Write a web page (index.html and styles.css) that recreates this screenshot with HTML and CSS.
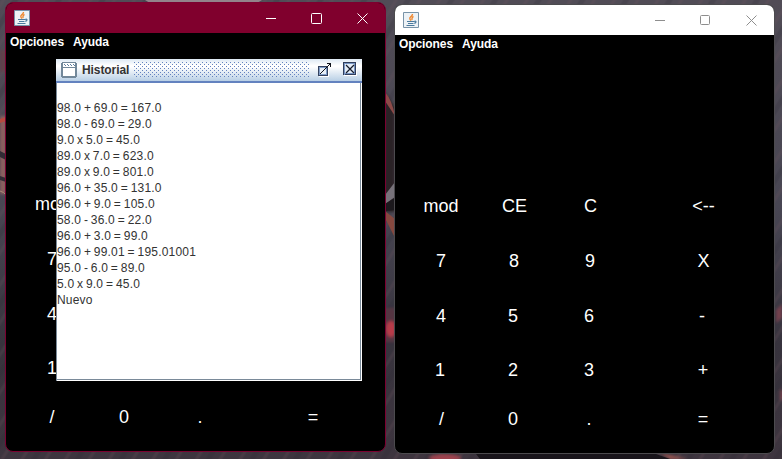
FILE: index.html
```html
<!DOCTYPE html>
<html lang="es">
<head>
<meta charset="utf-8">
<title>Calculadora</title>
<link rel="stylesheet" href="styles.css">
</head>
<body>
<svg class="wallpaper" viewBox="0 0 782 459" aria-hidden="true">
  <defs>
    <linearGradient id="sky" x1="0" y1="0" x2="0" y2="1">
      <stop offset="0" stop-color="#514c56"/><stop offset=".45" stop-color="#484653"/><stop offset=".75" stop-color="#37333d"/><stop offset="1" stop-color="#3e353f"/>
    </linearGradient>
    <pattern id="streaks" width="37" height="30" patternUnits="userSpaceOnUse" patternTransform="rotate(32)">
      <path d="M3 0V30M23 0V30" stroke="#73535f" stroke-opacity=".2" stroke-width="3"/>
      <path d="M13 0V30" stroke="#292731" stroke-opacity=".2" stroke-width="5"/>
    </pattern>
    <filter id="soft"><feGaussianBlur stdDeviation="1.6"/></filter>
  </defs>
  <path fill="url(#sky)" d="M0 0H782V459H0z"/>
  <path fill="url(#streaks)" d="M0 0H782V459H0z"/>
  <path d="M145 0H262L257 3H150z" fill="#93838a"/>
  <g filter="url(#soft)">
    <path d="M0 50h6v22H0z" fill="#62414b"/>
    <path d="M0 116h6v78H0z" fill="#8b5f5e"/>
    <path d="M384 92l11 15v105h-11z" fill="#2b2328"/>
    <path d="M384 308h12v34h-12z" fill="#553643"/>
    <ellipse cx="391" cy="329" rx="5" ry="8" fill="#b83a49"/>
    <ellipse cx="445" cy="458" rx="16" ry="4" fill="#9c424d"/>
    <path d="M776 310l6-6v14l-6 5zM780 390h3v10h-3z" fill="#74404e"/>
    <path d="M660 453l28 6h-18z" fill="#9c5550"/>
  </g>
  <path d="M0 119l6-2v4l-6 2z" fill="#b6493f"/>
  <path d="M0 151l6 3v6l-6-3zM0 176l6 2v4l-6-2z" fill="#302b35"/>
  <path d="M0 191q4 1 6 4" stroke="#a98a76" fill="none"/>
  <path d="M385 92q7 8 10 24l-10-15z" fill="#8c4a48"/>
  <path d="M385 195l10-13v15l-10 7z" fill="#77727a"/>
  <path d="M385 204l10-6v12l-10 1z" fill="#1c191d"/>
  <path d="M385 211l10 8v19l-10-20z" fill="#85483f"/>
  <path d="M476 454h180l14 5H480z" fill="#19151b"/>
</svg>

<main class="desktop">
  <section class="window window-active">
    <header class="titlebar">
      <svg class="java" viewBox="0 0 16 16"><use href="#cup"/></svg>
      <svg class="controls" viewBox="0 0 102 12"><path d="M0 6.500h10M45.500 2.500q0-1 1-1h8q1 0 1 1v8q0 1-1 1h-8q-1 0-1-1zM91.500 1.500l10 10m0-10l-10 10"/></svg>
    </header>
    <nav class="menu"><span>Opciones</span><span>Ayuda</span></nav>
    <div class="keys">
      <b class="covered">mod</b><i></i><i></i><i></i>
      <b class="covered">7</b><i></i><i></i><i></i>
      <b class="covered">4</b><i></i><i></i><i></i>
      <b class="covered">1</b><i></i><i></i><i></i>
      <b>/</b><b class="l">0</b><b class="l">.</b><b class="l">=</b>
    </div>
    <section class="history">
      <header class="caption">
        <svg class="frame-icon" viewBox="0 0 16 16"><path d="M1 1h14v14H1z" fill="#fff"/><path d="M1 0h14v1H1zM1 15h14v1H1zM0 1h2v14H0zM14 1h2v14h-2zM2 5h12v1H2zM2 14h12v1H2z" fill="#72889a"/><path d="M3 2.500h10M4 3.500h10" stroke="#5d7d9c" stroke-dasharray="1 2" fill="none"/></svg>
        <h1>Historial</h1>
        <i class="grip"></i>
        <svg class="max" viewBox="0 0 14 14" shape-rendering="crispEdges"><path d="M1 4h10v10H1z" fill="#fff"/><path d="M0 3h10v10H0z" fill="#33415f"/><path d="M1 4h8v8H1z" fill="#829fc9"/><path d="M2 5h6v6H2z" fill="#e8f0f8"/><path d="M2 10h1v1H2zM3 9h1v1H3zM4 8h1v1H4zM5 7h1v1H5zM6 6h1v1H6zM7 5h1v1H7zM8 4h1v1H8zM9 3h1v1H9zM10 2h1v1h-1zM9 0h4v4h-1V1H9zM11 1h1v1h-1z" fill="#10131c"/></svg>
        <svg class="close" viewBox="0 0 14 14"><path d="M1 1h13v13H1z" fill="#fff"/><path d="M0 0h13v13H0z" fill="#303e5b"/><path d="M1 1h12v12H1z" fill="#7896c4"/><path d="M2 2h9v9H2z" fill="#e2ecf7"/><path d="M2 12.500h11M12.500 1v12" stroke="#303e5b" fill="none"/><path d="M3 3l8 8M11 3l-8 8" stroke="#151a29" stroke-width="1.200"/></svg>
      </header>
      <pre class="log">
98.0 + 69.0 = 167.0
98.0 - 69.0 = 29.0
9.0 x 5.0 = 45.0
89.0 x 7.0 = 623.0
89.0 x 9.0 = 801.0
96.0 + 35.0 = 131.0
96.0 + 9.0 = 105.0
58.0 - 36.0 = 22.0
96.0 + 3.0 = 99.0
96.0 + 99.01 = 195.01001
95.0 - 6.0 = 89.0
5.0 x 9.0 = 45.0
Nuevo</pre>
    </section>
  </section>

  <section class="window window-idle">
    <header class="titlebar">
      <svg class="java" viewBox="0 0 16 16">
        <g id="cup">
          <path d="M.5.5h15v15H.5z" fill="#edf2f6" stroke="#7893a8"/>
          <path d="M9.500 2C9.800 4.500 5.500 5 7 7.300c.3.600.8.800.8 1.500M10.500 4.500C8 5.500 9.500 6.500 8.800 8" fill="none" stroke="#ef872e" stroke-width="1.400"/>
          <path d="M4 9.500h7.500M5 11.500h5.500M3.500 13.500h8M11.500 9.300c2-.6 2 1.500-.2 2" fill="none" stroke="#4a7a9d" stroke-width="1.200"/>
        </g>
      </svg>
      <svg class="controls" viewBox="0 0 102 12"><path d="M0 6.500h10M45.500 2.500q0-1 1-1h7q1 0 1 1v7q0 1-1 1h-7q-1 0-1-1zM91.500 1.500l10 10m0-10l-10 10"/></svg>
    </header>
    <nav class="menu"><span>Opciones</span><span>Ayuda</span></nav>
    <div class="keys">
      <b>mod</b><b class="r">CE</b><b class="r">C</b><b class="r">&lt;--</b>
      <b>7</b><b>8</b><b>9</b><b class="r">X</b>
      <b>4</b><b class="l">5</b><b class="l">6</b><b class="l">-</b>
      <b class="l">1</b><b class="l">2</b><b class="l">3</b><b>+</b>
      <b class="r">/</b><b class="l">0</b><b class="l">.</b><b>=</b>
    </div>
  </section>
</main>
</body>
</html>
```
FILE: styles.css
```css
* { box-sizing: border-box; }
body { margin: 0; width: 782px; height: 459px; overflow: hidden; font-family: "Liberation Sans", Arial, sans-serif; }
svg { display: block; flex: none; }
.wallpaper { position: absolute; inset: 0; width: 782px; height: 459px; }
.desktop { position: relative; width: 782px; height: 459px; }

.window { position: absolute; width: 381px; height: 450px; border: 1px solid; border-radius: 8px; background: #000; color: #fff; overflow: hidden; display: flex; flex-direction: column; }
.window-active { left: 5px; top: 2px; border-color: #7c0030; }
.window-idle { left: 394px; top: 4px; border-color: #4c4b4e; }
.titlebar { height: 30px; flex: none; display: flex; align-items: center; justify-content: space-between; padding: 0 17px 0 8px; }
.window-active .titlebar { background: #80002d; }
.window-idle .titlebar { background: #fff; }
.java { width: 16px; height: 16px; }
.controls { width: 102px; height: 12px; fill: none; stroke: #fff; }
.window-idle .controls { stroke: #8e8e8e; }
.menu { height: 19px; flex: none; display: flex; gap: 9px; padding-left: 4px; font-size: 12px; font-weight: bold; line-height: 18px; letter-spacing: -.08px; }
.keys { margin-top: 124px; padding-left: 5px; display: grid; grid-template-columns: 82px 64px 88px 138px; grid-template-rows: 55px 55px 55px 53px 45px; place-items: center; font-size: 18px; }
.keys b { font-weight: normal; line-height: 20px; }
.keys .l { padding-right: 2px; }
.keys .r { padding-left: 1px; }
/* Keys partly hidden behind the history frame end at its left edge. */
.keys .covered { justify-self: start; width: 45px; padding-left: 36px; overflow: hidden; }
.keys .covered:first-child { padding-left: 24px; }

.history { position: absolute; left: 50px; top: 56px; width: 306px; height: 322px; background: #fff; color: #333; display: flex; flex-direction: column; border-left: 1px solid #7a8a99; }
.caption { height: 24px; flex: none; margin-left: -1px; display: flex; align-items: center; padding: 0 5px 1px; border-bottom: 2px solid #6382bf; background: linear-gradient(#dde8f3, #fff 30%, #fff 35%, #b8cfe5); }
.frame-icon { width: 16px; height: 16px; }
.caption h1 { margin: 0 5px; width: 47px; font-size: 12px; line-height: 16px; white-space: nowrap; letter-spacing: -.08px; }
.grip { width: 176px; height: 16px; background: conic-gradient(from 270deg at 1px 1px, #6382bf 90deg, transparent 0) 0 0 / 4px 4px, conic-gradient(from 270deg at 1px 1px, #6382bf 90deg, transparent 0) 2px 2px / 4px 4px; }
.max { width: 14px; height: 14px; margin-left: 8px; }
.close { width: 14px; height: 14px; margin-left: 11px; align-self: flex-start; margin-top: 3px; }
.log { margin: 0 1px 1px 0; flex: 1; padding-top: 17px; border-right: 1px solid #7a8a99; border-bottom: 1px solid #7a8a99; font: 12px/16px "Liberation Sans", Arial, sans-serif; letter-spacing: .2px; word-spacing: -.8px; }
```
